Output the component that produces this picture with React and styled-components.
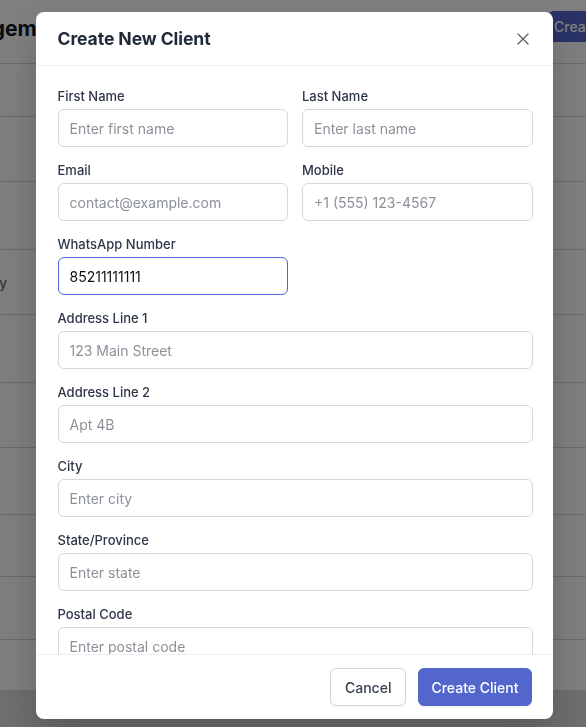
import React from "react";
import styled, { createGlobalStyle } from "styled-components";

const Global = createGlobalStyle`
  * { box-sizing: border-box; }
  html, body { margin: 0; padding: 0; }
  body {
    background: #dedede;
    font-family: Inter, "Noto Sans", "Liberation Sans", sans-serif;
    overflow: hidden;
  }
`;

const Page = styled.div`
  background: #ffffff;
  height: 690px;
  display: flex;
  flex-direction: column;
  overflow: hidden;
`;

const PageHeader = styled.header`
  height: 64px;
  flex: none;
  display: flex;
  align-items: flex-start;
  justify-content: space-between;
  border-bottom: 1px solid #d6d6d6;
`;

const PageTitle = styled.h1`
  margin: 14px 0 0 0;
  width: 70px;
  display: flex;
  justify-content: flex-end;
  overflow: hidden;
  white-space: nowrap;
  font-size: 21px;
  line-height: 30px;
  font-weight: 700;
  color: #111827;
`;

const PrimaryHeaderButton = styled.button`
  margin-top: 11px;
  width: 38px;
  height: 31px;
  border: none;
  border-radius: 6px 0 0 6px;
  background: #5266cc;
  color: #ffffff;
  font-family: inherit;
  font-size: 14px;
  font-weight: 500;
  padding: 0 0 0 6px;
  text-align: left;
  white-space: nowrap;
  overflow: hidden;
`;

const TableHead = styled.div`
  height: 53px;
  flex: none;
  border-bottom: 1px solid #d6d6d6;
`;

const Row = styled.div`
  height: ${(p) => p.$h}px;
  flex: none;
  border-bottom: 1px solid #d6d6d6;
  display: flex;
  align-items: center;
`;

const ClippedCell = styled.span`
  width: 7px;
  display: flex;
  justify-content: flex-end;
  overflow: hidden;
  white-space: nowrap;
  font-size: 14px;
  color: #4b5563;
`;

const Overlay = styled.div`
  position: fixed;
  inset: 0;
  background: rgba(0, 0, 0, 0.5);
  display: flex;
  align-items: flex-start;
  justify-content: center;
  padding: 12px 0 0 2px;
`;

const Modal = styled.div`
  width: 517px;
  height: 707px;
  background: #ffffff;
  border-radius: 8px;
  display: flex;
  flex-direction: column;
  overflow: hidden;
  box-shadow: 0 20px 40px rgba(0, 0, 0, 0.2);
`;

const ModalHeader = styled.div`
  flex: none;
  display: flex;
  align-items: center;
  justify-content: space-between;
  padding: 13px 20px 12px 22px;
  border-bottom: 1px solid #eceef1;
`;

const ModalTitle = styled.h2`
  margin: 0;
  font-size: 17.6px;
  line-height: 28px;
  font-weight: 700;
  color: #1f2937;
  letter-spacing: -0.1px;
`;

const CloseButton = styled.button`
  border: none;
  background: transparent;
  padding: 0;
  width: 20px;
  height: 20px;
  display: flex;
  align-items: center;
  justify-content: center;
  color: #59616d;
`;

const ModalBody = styled.div`
  flex: 1;
  min-height: 0;
  overflow: hidden;
  padding: 21px 20px 0 22px;
`;

const Grid = styled.div`
  display: grid;
  grid-template-columns: 1fr 1fr;
  column-gap: 14px;
`;

const Field = styled.div`
  display: flex;
  flex-direction: column;
  margin-bottom: 14px;
  grid-column: ${(p) => (p.$full ? "1 / -1" : "auto")};
`;

const Label = styled.label`
  font-size: 13px;
  line-height: 18px;
  font-weight: 500;
  color: #2d3748;
  margin-bottom: 4px;
`;

const Input = styled.input`
  height: 38px;
  width: 100%;
  border: 1px solid ${(p) => (p.$focused ? "#4f63d2" : "#d3d7de")};
  border-radius: 6px;
  padding: 0 11px;
  font-family: inherit;
  font-size: 14px;
  color: #111111;
  background: #ffffff;
  outline: none;
  &::placeholder {
    color: #8c9199;
  }
`;

const ModalFooter = styled.div`
  flex: none;
  display: flex;
  justify-content: flex-end;
  gap: 12px;
  padding: 13px 21px 13px 21px;
  border-top: 1px solid #eceef1;
`;

const Button = styled.button`
  height: 38px;
  padding: 0 ${(p) => (p.$primary ? 12 : 14)}px;
  border-radius: 6px;
  font-family: inherit;
  font-size: 14px;
  font-weight: 500;
  border: 1px solid ${(p) => (p.$primary ? "#5266cc" : "#d3d7de")};
  background: ${(p) => (p.$primary ? "#5266cc" : "#ffffff")};
  color: ${(p) => (p.$primary ? "#ffffff" : "#374151")};
  box-shadow: 0 1px 2px rgba(0, 0, 0, 0.06);
`;

const fieldsTop = [
  { label: "First Name", ph: "Enter first name" },
  { label: "Last Name", ph: "Enter last name" },
  { label: "Email", ph: "contact@example.com" },
  { label: "Mobile", ph: "+1 (555) 123-4567" },
];

const fieldsFull = [
  { label: "Address Line 1", ph: "123 Main Street" },
  { label: "Address Line 2", ph: "Apt 4B" },
  { label: "City", ph: "Enter city" },
  { label: "State/Province", ph: "Enter state" },
  { label: "Postal Code", ph: "Enter postal code" },
  { label: "Country", ph: "Enter country" },
];

const rowHeights = [65, 68, 65, 68, 65, 67, 62, 63];

export default function App() {
  return (
    <>
      <Global />
      <Page>
        <PageHeader>
          <PageTitle>Client Management</PageTitle>
          <PrimaryHeaderButton>Create Client</PrimaryHeaderButton>
        </PageHeader>
        <TableHead />
        {rowHeights.map((h, i) => (
          <Row key={i} $h={h}>
            {i === 2 && <ClippedCell>Company</ClippedCell>}
          </Row>
        ))}
      </Page>
      <Overlay>
        <Modal>
          <ModalHeader>
            <ModalTitle>Create New Client</ModalTitle>
            <CloseButton aria-label="Close">
              <svg width="12" height="12" viewBox="0 0 12 12" fill="none">
                <path d="M1 1L11 11M11 1L1 11" stroke="currentColor" strokeWidth="1.3" strokeLinecap="round" />
              </svg>
            </CloseButton>
          </ModalHeader>
          <ModalBody>
            <Grid>
              {fieldsTop.map((f) => (
                <Field key={f.label}>
                  <Label>{f.label}</Label>
                  <Input placeholder={f.ph} readOnly />
                </Field>
              ))}
              <Field>
                <Label>WhatsApp Number</Label>
                <Input $focused defaultValue="85211111111" />
              </Field>
              <div />
              {fieldsFull.map((f) => (
                <Field key={f.label} $full>
                  <Label>{f.label}</Label>
                  <Input placeholder={f.ph} readOnly />
                </Field>
              ))}
            </Grid>
          </ModalBody>
          <ModalFooter>
            <Button>Cancel</Button>
            <Button $primary>Create Client</Button>
          </ModalFooter>
        </Modal>
      </Overlay>
    </>
  );
}
